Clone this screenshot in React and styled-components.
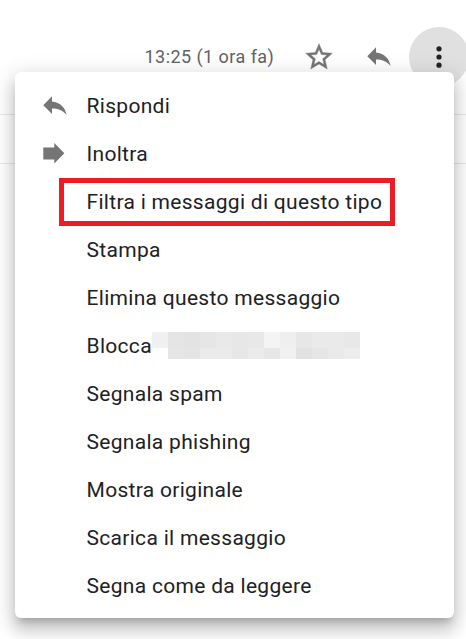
import React from 'react';
import styled, { createGlobalStyle } from 'styled-components'


const GlobalStyle = createGlobalStyle`
  body {
    margin: 0;
    background: #fff;
    font-family: Roboto, Arial, sans-serif;
  }
`

const items = [
    { label: 'Rispondi', icon: 'reply' },
    { label: 'Inoltra', icon: 'forward' },
    { label: 'Filtra i messaggi di questo tipo', marked: true },
    { label: 'Stampa' },
    { label: 'Elimina questo messaggio' },
    { label: 'Blocca', hidden: true },
    { label: 'Segnala spam' },
    { label: 'Segnala phishing' },
    { label: 'Mostra originale' },
    { label: 'Scarica il messaggio' },
    { label: 'Segna come da leggere' }
];

// shades of the blocks that cover the sender's name, one list per row
const topShades = ['#f0f0f0', '#e5e5e5', '#e3e3e3', '#e6e6e6', '#e9e9e9', '#e7e7e7', '#e8e8e8', '#f4f4f4', '#efefef', '#e7e7e7', '#eaeaea', '#eaeaea', '#e8e8e8'];
const bottomShades = ['#fff', '#e6e6e6', '#e4e4e4', '#ebebeb', '#ebebeb', '#e7e7e7', '#ebebeb', '#e7e7e7', '#f1f1f1', '#e2e2e2', '#e6e6e6', '#eaeaea', '#ededed'];

const ReplyIcon = () => (
    <svg width="24" height="20" viewBox="0 0 24 20" fill="#757575">
        <path d="M9 5.6V.3L.3 9.2 9 18.1v-5.5c6 0 10.6 1.5 14.6 6.5C22.3 12 17.6 6.6 9 5.6z" />
    </svg>
);

const ForwardIcon = () => (
    <svg width="22" height="21" viewBox="0 0 22 21" fill="#757575">
        <path d="M.3 4.5h11V0l10 10.2-10 10.3v-4H.3z" />
    </svg>
);

const StarIcon = () => (
    <svg width="32" height="32" viewBox="0 0 24 24" fill="#757575" stroke="#757575" strokeWidth="0.3">
        <path d="M22 9.24l-7.19-.62L12 2 9.19 8.63 2 9.24l5.46 4.73L5.82 21 12 17.27 18.18 21l-1.63-7.03L22 9.24zM12 15.4l-3.76 2.27 1-4.28-3.32-2.88 4.38-.38L12 6.1l1.71 4.04 4.38.38-3.32 2.88 1 4.28L12 15.4z" />
    </svg>
);

const MoreIcon = () => (
    <svg width="6" height="24" viewBox="0 0 6 24" fill="#202124">
        <circle cx="3" cy="3.8" r="2.6" />
        <circle cx="3" cy="12" r="2.6" />
        <circle cx="3" cy="20.2" r="2.6" />
    </svg>
);

const MenuItem = ({ label, icon, marked, hidden }) => (
    <Item>
        <IconSlot>
            {icon === 'reply' && <ReplyIcon />}
            {icon === 'forward' && <ForwardIcon />}
        </IconSlot>
        <Label>{label}</Label>
        {hidden && (
            <Mosaic>
                {topShades.map((shade, i) => <Block key={i} $shade={shade} />)}
                {bottomShades.map((shade, i) => <Block key={i} $shade={shade} />)}
            </Mosaic>
        )}
        {marked && <Marker />}
    </Item>
);

export default function App() {
    return (
        <Page>
            <GlobalStyle />
            <Header>
                <Time>13:25 (1 ora fa)</Time>
                <StarButton><StarIcon /></StarButton>
                <ReplyButton><ReplyIcon /></ReplyButton>
                <MoreButton><MoreIcon /></MoreButton>
            </Header>
            <Line />
            <Line />
            <Menu>
                {items.map(item => <MenuItem key={item.label} {...item} />)}
            </Menu>
        </Page>
    );
}

const Page = styled.div`
  position: relative;
  box-sizing: border-box;
  width: 466px;
  height: 639px;
  overflow: hidden;
  background: #fff;
`
const Header = styled.div`
  box-sizing: border-box;
  display: flex;
  align-items: center;
  width: 469px;
  height: 114px;
  padding: 0 0 0 144.5px;
`
const Time = styled.span`
  width: 158.5px;
  font-size: 18px;
  line-height: 24px;
  letter-spacing: 0.45px;
  color: #5f6368;
  white-space: nowrap;
`
const IconButton = styled.button`
  display: flex;
  flex: none;
  align-items: center;
  justify-content: center;
  padding: 0;
  border: 0;
  background: none;
`
const StarButton = styled(IconButton)`
  width: 32px;
`
const ReplyButton = styled(IconButton)`
  width: 24px;
  margin: 0 18px 0 32px;
`
const MoreButton = styled(IconButton)`
  width: 60px;
  height: 60px;
  border-radius: 50%;
  background: #e0e0e0;
`
const Line = styled.div`
  height: 48px;
  border-top: 1px solid #e8e8e8;
`
const Menu = styled.div`
  position: absolute;
  top: 72px;
  left: 15px;
  box-sizing: border-box;
  width: 439px;
  height: 546px;
  padding: 10px 0 8px;
  border-radius: 6px;
  background: #fff;
  box-shadow: 0 12px 15px 1.5px rgba(0, 0, 0, 0.14), 0 4.5px 21px 3px rgba(0, 0, 0, 0.12), 0 7.5px 7.5px -4.5px rgba(0, 0, 0, 0.2);
`
const Item = styled.div`
  position: relative;
  display: flex;
  align-items: center;
  height: 48px;
`
const IconSlot = styled.div`
  display: flex;
  flex: none;
  width: 43.5px;
  padding: 0 0 1px 28px;
`
const Label = styled.span`
  font-size: 21px;
  line-height: 30px;
  letter-spacing: 0.3px;
  color: #202124;
  white-space: nowrap;
`
const Mosaic = styled.div`
  display: grid;
  grid-template-columns: repeat(13, 16px);
  grid-template-rows: 16px 11px;
  margin-bottom: 1px;
`
const Block = styled.div`
  background: ${props => props.$shade};
`
const Marker = styled.div`
  position: absolute;
  top: 0;
  left: 44px;
  box-sizing: border-box;
  width: 336px;
  height: 48px;
  border: 5px solid #ed1c24;
`
